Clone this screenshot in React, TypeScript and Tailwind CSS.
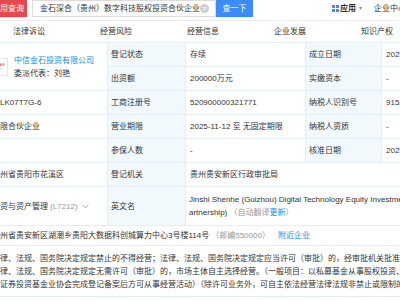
import React from "react";

const Label = ({ children }: { children: React.ReactNode }) => (
  <div className="bg-[#f2f9fc] flex items-center pl-[3px] whitespace-nowrap">{children}</div>
);
const Val = ({ children, className = "" }: { children?: React.ReactNode; className?: string }) => (
  <div className={"bg-white flex items-center pl-[4px] whitespace-nowrap overflow-hidden " + className}>{children}</div>
);
const V1 = ({ children }: { children?: React.ReactNode }) => (
  <div className="bg-white flex items-center whitespace-nowrap overflow-hidden">{children}</div>
);

export default function App() {
  return (
    <div className="w-[400px] h-[300px] overflow-hidden bg-white text-[8px] leading-[13px] text-[#333] font-['Liberation_Sans','Noto_Sans_CJK_SC',sans-serif]">
      {/* header */}
      <div className="h-[21px] w-max flex items-start border-b border-[#ececec] whitespace-nowrap">
        <div className="shrink-0 w-[27px] h-[17px] bg-[#e8474b] text-white flex items-center justify-end pr-[3px]">用查询</div>
        <div className="shrink-0 ml-[5px] w-[184px] h-[17px] border border-[#dcdcdc] flex items-center pl-[7px]">
          <span className="shrink-0">金石深合（贵州）数字科技股权投资合伙企业</span>
          <span className="shrink-0 ml-auto mr-[6px] w-[9px] h-[9px] rounded-full bg-[#d0d0d0] flex items-center justify-center">
            <svg width="5" height="5" viewBox="0 0 5 5"><path d="M1 1L4 4M4 1L1 4" stroke="#fff" strokeWidth="1" /></svg>
          </span>
        </div>
        <div className="shrink-0 w-[37px] h-[17px] bg-[#3d8bf5] text-white flex items-center justify-center">查一下</div>
        <div className="shrink-0 ml-[79px] h-[17px] flex items-center">
          <svg width="7" height="7" viewBox="0 0 7 7">
            <rect x="0" y="0" width="3" height="3" fill="#3d8bf5" />
            <rect x="4" y="0" width="3" height="3" fill="#3d8bf5" />
            <rect x="0" y="4" width="3" height="3" fill="#3d8bf5" />
            <rect x="4" y="4" width="3" height="3" fill="#3d8bf5" />
          </svg>
          <span className="ml-[1px] font-bold">应用</span>
          <span className="ml-[3px] text-[6px] text-[#888]">▾</span>
        </div>
        <div className="shrink-0 ml-[12px] h-[17px] flex items-center">企业中心</div>
      </div>
      {/* tabs */}
      <div className="h-[21px] flex items-center whitespace-nowrap">
        {["法律诉讼", "经营风险", "经营信息", "企业发展", "知识产权"].map((t) => (
          <div key={t} className="w-[87px] shrink-0 pl-[13px]">{t}</div>
        ))}
      </div>
      {/* table */}
      <div className="w-max grid grid-cols-[107px_77px_119px_75px_120px] grid-rows-[23px_23px_23px_23px_23px_23px_38px_19px_50px] gap-px bg-[#e4eef6] border-y border-[#e4eef6]">
        <div className="row-span-2 bg-white flex items-center">
          <div className="ml-[-10px] w-[18px] h-[18px] border border-[#e6e6e6] flex flex-col items-center justify-center shrink-0">
            <span className="text-[3px] leading-[4px] text-[#c33]">中信金石</span>
            <span className="text-[2px] leading-[3px] text-[#999]">CITIC</span>
          </div>
          <div className="ml-[6px] flex flex-col whitespace-nowrap">
            <span className="text-[#128bed]">中信金石投资有限公司</span>
            <span>委派代表：刘艳</span>
          </div>
        </div>
        <Label>登记状态</Label>
        <Val>存续</Val>
        <Label>成立日期</Label>
        <Val>2025-11-12</Val>

        <Label>出资额</Label>
        <Val>200000万元</Val>
        <Label>实缴资本</Label>
        <Val>-</Val>

        <V1>LK07T7G-6</V1>
        <Label>工商注册号</Label>
        <Val>520900000321771</Val>
        <Label>纳税人识别号</Label>
        <Val>91520900MA</Val>

        <V1>限合伙企业</V1>
        <Label>营业期限</Label>
        <Val>2025-11-12 至 无固定期限</Val>
        <Label>纳税人资质</Label>
        <Val>-</Val>

        <V1></V1>
        <Label>参保人数</Label>
        <Val>-</Val>
        <Label>核准日期</Label>
        <Val>2025-11-12</Val>

        <V1>州省贵阳市花溪区</V1>
        <Label>登记机关</Label>
        <Val className="col-span-3">贵州贵安新区行政审批局</Val>

        <V1>
          <span>资与资产管理</span>
          <span className="ml-[2px] text-[#999]">(L7212)</span>
          <svg className="ml-[4px]" width="7" height="5" viewBox="0 0 7 5"><path d="M0.5 0.8L3.5 3.8L6.5 0.8" stroke="#999" strokeWidth="0.9" fill="none" /></svg>
        </V1>
        <Label>英文名</Label>
        <div className="col-span-3 bg-white flex flex-col justify-center pl-[3px] whitespace-nowrap overflow-hidden">
          <span>Jinshi Shenhe (Guizhou) Digital Technology Equity Investment Fund (Limited P</span>
          <span>
            artnership) <span className="text-[#999]">（自动翻译</span>
            <span className="text-[#128bed]">更新</span>
            <span className="text-[#999]">）</span>
          </span>
        </div>

        <div className="col-span-5 bg-white flex items-center whitespace-nowrap">
          <span>州省贵安新区湖潮乡贵阳大数据科创城算力中心3号楼114号</span>
          <span className="ml-[2px] text-[#999]">（邮编550000）</span>
          <span className="ml-[8px] text-[#128bed]">附近企业</span>
        </div>

        <div className="col-span-5 bg-white flex flex-col justify-center whitespace-nowrap">
          <span>律、法规、国务院决定规定禁止的不得经营；法律、法规、国务院决定规定应当许可（审批）的，经审批机关批准后方可经营；</span>
          <span>律、法规、国务院决定规定无需许可（审批）的，市场主体自主选择经营。（一般项目：以私募基金从事股权投资、投资管理</span>
          <span>证券投资基金业协会完成登记备案后方可从事经营活动）（除许可业务外，可自主依法经营法律法规非禁止或限制的项目）</span>
        </div>
      </div>
    </div>
  );
}
